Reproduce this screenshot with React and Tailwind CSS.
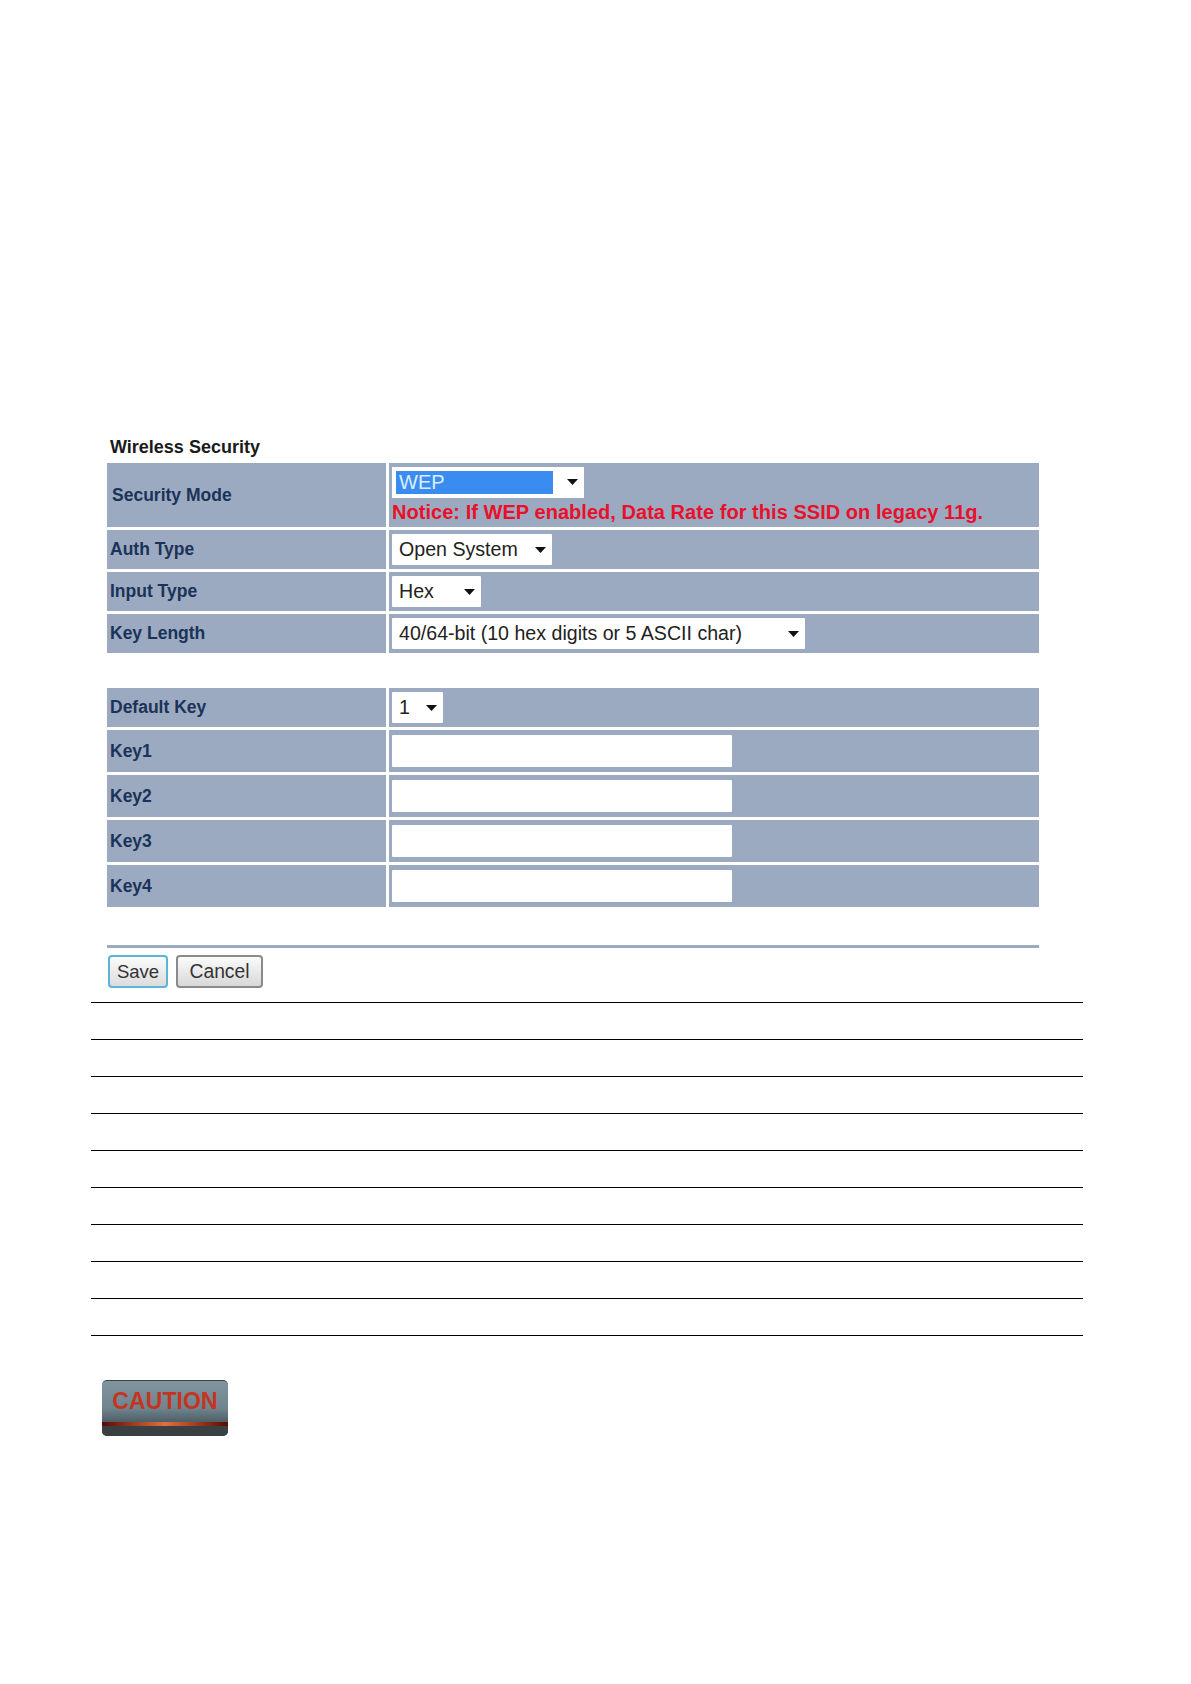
const Caret = () => (
  <svg width="11" height="6" viewBox="0 0 11 6" className="shrink-0">
    <path d="M0 0H11L5.5 6Z" fill="#111" />
  </svg>
);

const Dropdown = ({ text, width }) => (
  <div
    className={`flex h-[31px] items-center justify-between rounded-[1px] bg-white pr-[6px] pl-[7px] text-[19.6px] text-[#222] ${width}`}
  >
    <span className="whitespace-nowrap">{text}</span>
    <Caret />
  </div>
);

const Row = ({ label, height, children, labelClass = "pl-[3px]" }) => (
  <div className={`grid grid-cols-[279px_650px] gap-x-[3px] ${height}`}>
    <div
      className={`flex items-center bg-[#9baac0] ${labelClass} text-[17.5px] font-bold text-[#1b3358]`}
    >
      {label}
    </div>
    <div className="flex items-center bg-[#9baac0] pl-[3px]">{children}</div>
  </div>
);

const KeyInput = () => (
  <div className="h-[32px] w-[340px] rounded-[1px] bg-white" />
);

const rules = [0, 1, 2, 3, 4, 5, 6, 7, 8, 9];

export default function App() {
  return (
    <div className="min-h-[1684px] bg-white pt-[435px] font-['Liberation_Sans',Arial,sans-serif]">
      <div className="ml-[107px] w-[932px]">
        <h1 className="mb-[3px] pl-[3px] text-[18px] leading-[25px] font-bold text-[#1a1a1a]">
          Wireless Security
        </h1>

        <div className="flex flex-col gap-[3px]">
          <Row label="Security Mode" height="h-[64px]" labelClass="pl-[5px]">
            <div className="flex flex-col pt-[1px]">
              <div className="flex h-[31px] w-[192px] items-center justify-between bg-white pr-[6px] pl-[4px]">
                <div className="flex h-[23px] w-[157px] items-center bg-[#3b8cf0] pl-[3px] text-[20px] text-[#dcecff]">
                  WEP
                </div>
                <Caret />
              </div>
              <div className="mt-[2px] text-[20px] leading-[25px] font-bold tracking-[0.04px] whitespace-nowrap text-[#e8102a]">
                Notice: If WEP enabled, Data Rate for this SSID on legacy 11g.
              </div>
            </div>
          </Row>
          <Row label="Auth Type" height="h-[39px]">
            <Dropdown text="Open System" width="w-[160px]" />
          </Row>
          <Row label="Input Type" height="h-[39px]">
            <Dropdown text="Hex" width="w-[89px]" />
          </Row>
          <Row label="Key Length" height="h-[39px]">
            <Dropdown
              text="40/64-bit (10 hex digits or 5 ASCII char)"
              width="w-[413px]"
            />
          </Row>
        </div>

        <div className="mt-[35px] flex flex-col gap-[3px]">
          <Row label="Default Key" height="h-[39px]">
            <Dropdown text="1" width="w-[51px]" />
          </Row>
          <Row label="Key1" height="h-[42px]">
            <KeyInput />
          </Row>
          <Row label="Key2" height="h-[42px]">
            <KeyInput />
          </Row>
          <Row label="Key3" height="h-[42px]">
            <KeyInput />
          </Row>
          <Row label="Key4" height="h-[42px]">
            <KeyInput />
          </Row>
        </div>

        <div className="mt-[38px] h-[3px] bg-[#9baac0]" />

        <div className="mt-[7px] flex gap-[8px] pl-[1px]">
          <button className="h-[33px] w-[60px] rounded-[4px] border-2 border-[#5cb4d8] bg-gradient-to-b from-[#fbfbfb] to-[#dcdcdc] text-[18.5px] text-[#333]">
            Save
          </button>
          <button className="h-[33px] w-[87px] rounded-[4px] border-2 border-[#8a8a8a] bg-gradient-to-b from-[#fbfbfb] to-[#d8d8d8] pt-[1px] text-[19.3px] text-[#333]">
            Cancel
          </button>
        </div>
      </div>

      <div className="mt-[14px] ml-[91px] w-[992px]">
        {rules.map((r) => (
          <div key={r} className="h-[37px] border-t border-black" />
        ))}
      </div>

      <div className="relative mt-[8px] ml-[102px] h-[56px] w-[126px] overflow-hidden rounded-[5px] border-t border-[#3a4347] bg-gradient-to-b from-[#80959f] via-[#6f848e] to-[#2f3a3f]">
        <div className="pt-[7px] text-center text-[23px] leading-[26px] font-bold tracking-[0.1px] text-[#c4341f]">
          CAUTION
        </div>
        <div className="absolute inset-x-0 top-[41px] h-[4px] bg-gradient-to-r from-[#5a0a08] via-[#e0703f] to-[#5a0a08]" />
        <div className="absolute inset-x-0 top-[45px] bottom-0 bg-[#3a3f42]" />
      </div>
    </div>
  );
}
